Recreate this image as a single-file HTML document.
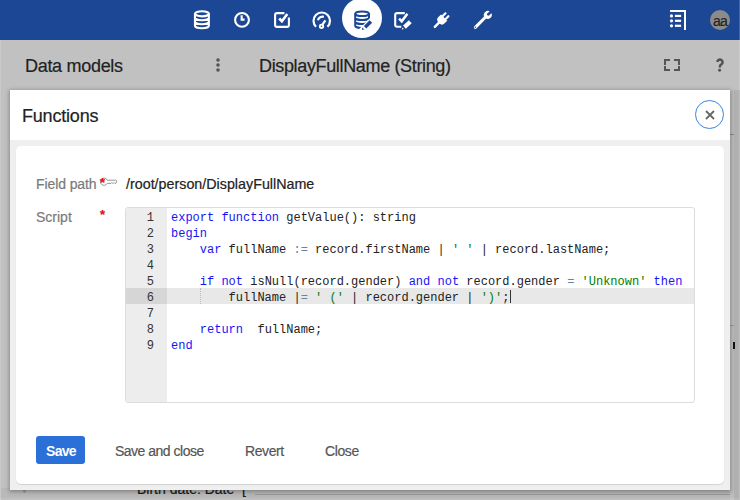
<!DOCTYPE html>
<html><head><meta charset="utf-8">
<style>
*{box-sizing:border-box;margin:0;padding:0}
html,body{width:740px;height:500px;overflow:hidden}
body{position:relative;background:#c1c1c1;font-family:"Liberation Sans",sans-serif;color:#222}
.abs{position:absolute}
.t{position:absolute;white-space:pre;line-height:1;-webkit-text-stroke:0.2px currentColor}
#hdr{left:0;top:0;width:740px;height:40px;background:#1c4794}
svg{position:absolute;overflow:visible}
#modal{left:10px;top:90px;width:720px;height:400px;background:#efefef;box-shadow:0 1px 4px 1px rgba(0,0,0,.28)}
#mhead{left:0;top:0;width:720px;height:50px;background:#fff}
#card{left:6px;top:56px;width:708px;height:338px;background:#fff;border-radius:5px;box-shadow:0 1px 1px rgba(0,0,0,.12)}
#editor{left:125px;top:207px;width:570px;height:196px;border:1px solid #dcdcdc;border-radius:3px;background:#fff;overflow:hidden}
#gutter{left:0;top:0;width:41px;height:196px;background:#ededed}
.code{position:absolute;font-family:"Liberation Mono",monospace;font-size:12px;line-height:16px;white-space:pre}
.ln{position:absolute;left:0;width:28px;text-align:right;font-family:"Liberation Mono",monospace;font-size:12px;line-height:16px;color:#333}
.k{color:#1515f5}.s{color:#008000}.o{color:#6783a3}
</style></head><body>
<div id="hdr" class="abs"></div>
<!-- database -->
<svg style="left:190px;top:7px" width="24" height="24" viewBox="0 0 24 24" fill="none" stroke="#fff" stroke-width="2.1">
<ellipse cx="11.9" cy="6.8" rx="6.95" ry="2.55"/>
<path d="M4.95 6.8V18.7M18.85 6.8V18.7M4.95 18.7a6.95 2.55 0 0 0 13.9 0M4.95 10.7a6.95 2.55 0 0 0 13.9 0M4.95 14.7a6.95 2.55 0 0 0 13.9 0"/>
</svg>
<!-- clock -->
<svg style="left:230px;top:8px" width="24" height="24" viewBox="0 0 24 24" fill="none" stroke="#fff" stroke-width="2.1">
<circle cx="12" cy="11.9" r="6.9"/><path d="M11.65 7.2V11.65H14.6" stroke-linejoin="miter"/>
</svg>
<!-- checkbox -->
<svg style="left:270px;top:8px" width="24" height="24" viewBox="0 0 24 24" fill="none" stroke="#fff" stroke-width="2.1">
<path d="M14.4 5.1H7.1Q5.1 5.1 5.1 7.1V16.9Q5.1 18.9 7.1 18.9H16.9Q18.9 18.9 18.9 16.9V9.6"/><path d="M9.2 10.5L11.9 13.2L17.3 6" stroke-width="2.6"/>
</svg>
<!-- gauge -->
<svg style="left:310px;top:8px" width="24" height="24" viewBox="0 0 24 24" fill="none" stroke="#fff" stroke-width="2.2">
<path d="M6.05 18.7A8.25 8.25 0 1 1 17.45 18.7"/>
<path d="M7.9 12.2A4.8 4.8 0 0 1 13.9 8.9"/>
<path d="M12.2 16.8L15.4 12.3"/>
<circle cx="11.5" cy="18.3" r="1.7" stroke-width="1.9"/>
</svg>
<!-- active -->
<div class="abs" style="left:342px;top:-2px;width:40px;height:40px;border-radius:50%;background:#fff"></div>
<svg style="left:350px;top:7px" width="26" height="26" viewBox="0 0 26 26" fill="none" stroke="#1c4794" stroke-width="2">
<ellipse cx="12.1" cy="6.75" rx="6.9" ry="2.35"/>
<path d="M5.2 6.75V18.65M19 6.75V11M5.2 10.65a6.9 2.35 0 0 0 13.8 0M5.2 14.65a6.9 2.35 0 0 0 13.8 0M5.2 18.65a6.9 2.35 0 0 0 13.8 0"/>
<path d="M10.5 24.9L23 12.5" stroke="#fff" stroke-width="6"/>
<path d="M15.1 20.3L20.9 14.5" stroke-width="3.5"/>
<path d="M12 20.4L12 22.8L14.6 22.6Z" fill="#1c4794" stroke="none"/>
</svg>
<!-- checkbox edit -->
<svg style="left:390px;top:8px" width="26" height="26" viewBox="0 0 26 26" fill="none" stroke="#fff" stroke-width="2.1">
<path d="M14.8 5.1H7.2Q5.2 5.1 5.2 7.1V16.8Q5.2 18.8 7.2 18.8H11.2"/>
<path d="M9.1 10.7L11.7 13.3L17.4 5.7" stroke-width="2.5"/>
<path d="M14.4 19.1L20.3 13.7" stroke-width="4.2"/>
<path d="M11.9 21.4L12.3 19.4L13.9 21Z" fill="#fff" stroke="none"/>
</svg>
<!-- plug -->
<svg style="left:430px;top:8px" width="24" height="24" viewBox="0 0 24 24" fill="#fff" stroke="#fff">
<g transform="translate(11.9 11.8) rotate(45)">
<path d="M0 10.0V2" stroke-width="2.4" stroke-linecap="round"/>
<path d="M-4.4 -3.2H4.4V0.6Q4.4 4.3 0.6 4.3H-0.6Q-4.4 4.3 -4.4 0.6Z" stroke="none"/>
<path d="M-2.1 -3V-7.1M2.1 -3V-7.1" stroke-width="2.2" stroke-linecap="round"/>
</g>
</svg>
<!-- wrench -->
<svg style="left:470px;top:8px" width="24" height="24" viewBox="0 0 24 24" fill="#fff" stroke="#fff">
<g transform="translate(17.8 6.9) rotate(45)">
<path d="M0 2V17.6" stroke-width="3" stroke-linecap="round"/>
<circle cx="0" cy="0" r="3.9" stroke="none"/>
<path d="M-1.25 -5V-0.6" stroke="#1c4794" stroke-width="0"/>
<rect x="-1.3" y="-5" width="2.6" height="4.3" fill="#1c4794" stroke="none"/>
<circle cx="0" cy="-0.7" r="1.3" fill="#1c4794" stroke="none"/>
<circle cx="0" cy="17.6" r="0.7" fill="#1c4794" stroke="none"/>
</g>
</svg>
<!-- list -->
<svg style="left:669px;top:10px" width="18" height="20" viewBox="0 0 18 20" fill="#fff">
<rect x="1" y="0" width="16" height="2"/><rect x="15" y="0" width="2" height="20"/>
<circle cx="2.5" cy="5.9" r="1.6"/><circle cx="2.5" cy="10.8" r="1.6"/><circle cx="2.5" cy="15.8" r="1.6"/>
<rect x="5.9" y="4.8" width="6.2" height="2.2"/><rect x="5.9" y="9.7" width="6.2" height="2.2"/><rect x="5.9" y="14.7" width="6.2" height="2.2"/>
</svg>
<!-- avatar -->
<div class="abs" style="left:710px;top:10px;width:20px;height:20px;border-radius:50%;background:#8b8b8b"></div>
<div class="t" style="left:713px;top:14px;font-size:14px;letter-spacing:-0.9px;color:#222">aa</div>

<!-- background title bar -->
<div class="t" style="left:25px;top:57px;font-size:18px;letter-spacing:-0.3px">Data models</div>
<svg style="left:216px;top:58px" width="4" height="14" viewBox="0 0 4 14" fill="#555"><circle cx="2" cy="2" r="1.8"/><circle cx="2" cy="7" r="1.8"/><circle cx="2" cy="12" r="1.8"/></svg>
<div class="t" style="left:259px;top:57px;font-size:18px;letter-spacing:-0.35px">DisplayFullName (String)</div>
<svg style="left:664px;top:59px" width="16" height="12" viewBox="0 0 16 12" fill="none" stroke="#555" stroke-width="2"><path d="M1 6V1H6M10 1H15V6M15 7V11H10M6 11H1V7"/></svg>
<svg style="left:712px;top:55px" width="16" height="20" viewBox="0 0 16 20" fill="none" stroke="#505050" stroke-width="2.4"><path d="M5.4 7A2.6 2.6 0 1 1 9.7 9.1Q7.9 10 7.9 11.4V12.4"/><circle cx="7.6" cy="15.3" r="1.45" fill="#505050" stroke="none"/></svg>

<!-- Background bottom text -->
<div class="abs" style="left:0;top:488px;width:740px;height:12px;background:#b9b9b9"></div>
<div class="abs" style="left:247px;top:488px;width:493px;height:12px;background:#b6b6b6"></div>
<div class="t" style="left:137px;top:482px;font-size:14px;color:#1a1a1a">Birth date: Date</div>
<div class="t" style="left:242px;top:482px;font-size:14px;color:#1a1a1a">[</div>
<div class="abs" style="left:255px;top:494px;width:485px;height:1px;background:#999"></div>
<div class="abs" style="left:730px;top:90px;width:4px;height:410px;background:#bcbcbc"></div>
<div class="abs" style="left:734px;top:90px;width:6px;height:410px;background:#b1b1b1"></div>
<div class="abs" style="left:0px;top:40px;width:1px;height:460px;background:#c9c9c9"></div>
<div class="abs" style="left:730px;top:134px;width:4px;height:1px;background:#888"></div>
<div class="abs" style="left:730px;top:325px;width:4px;height:1px;background:#999"></div>
<div class="abs" style="left:733px;top:342px;width:1.5px;height:7px;background:#111"></div>

<div class="abs" style="left:23px;top:489px;width:3px;height:3.5px;border-radius:50%;background:#9a9a9a"></div>
<!-- modal -->
<div id="modal" class="abs">
  <div id="mhead" class="abs"></div>
  <div id="card" class="abs"></div>
</div>
<div class="t" style="left:22px;top:107px;font-size:18px;letter-spacing:-0.2px">Functions</div>
<div class="abs" style="left:695px;top:100px;width:29px;height:29px;border-radius:50%;border:1.3px solid #3b82e0"></div>
<svg style="left:705px;top:110px" width="10" height="10" viewBox="0 0 10 10" stroke="#666" stroke-width="1.8"><path d="M1 1L9 9M9 1L1 9"/></svg>

<div class="t" style="left:36px;top:177px;font-size:14px;color:#7a7a7a;letter-spacing:-0.1px">Field path</div>
<svg style="left:100px;top:177px" width="18" height="10" viewBox="0 0 18 10" fill="none" stroke="#8a8a8a" stroke-width="0.9"><path d="M7.27 3.2H15.6Q16.8 3.2 16.8 4.4L15.9 6.4H15.1L14.4 5.7L13.7 6.4L13 5.7L12.3 6.4L11.6 5.7L10.9 6.4H7.17A3.6 3.6 0 1 1 7.27 3.2Z"/></svg>
<div class="t" style="left:100px;top:176px;font-size:13px;font-weight:bold;color:#e01010">*</div>

<div class="t" style="left:126px;top:177px;font-size:14.3px;color:#222">/root/person/DisplayFullName</div>

<div class="t" style="left:36px;top:210px;font-size:14px;color:#7a7a7a">Script</div>
<div class="t" style="left:100px;top:208px;font-size:13px;font-weight:bold;color:#e01010">*</div>

<div id="editor" class="abs">
  <div id="gutter" class="abs"></div>
  <div class="abs" style="left:0;top:80px;width:570px;height:16px;background:#e8e8e8"></div>
  <div class="abs" style="left:0;top:80px;width:41px;height:16px;background:#d6d6d6"></div>
  <div class="abs" style="left:74px;top:80px;width:0;height:16px;border-left:1px dotted #bbb"></div>
  <div class="ln" style="top:2px">1<br>2<br>3<br>4<br>5<br>6<br>7<br>8<br>9</div>
  <div class="code" style="left:45px;top:2px"><span class="k">export</span> <span class="k">function</span> getValue(): string
<span class="k">begin</span>
    <span class="k">var</span> fullName <span class="o">:=</span> record.firstName | <span class="s">' '</span> | record.lastName;

    <span class="k">if</span> <span class="k">not</span> isNull(record.gender) <span class="k">and</span> <span class="k">not</span> record.gender <span class="o">=</span> <span class="s">'Unknown'</span> <span class="k">then</span>
        fullName |<span class="o">=</span> <span class="s">' ('</span> | record.gender | <span class="s">')'</span>;
<span class="k"></span>
    <span class="k">return</span>  fullName;
<span class="k">end</span></div>
  <div class="abs" style="left:384px;top:82px;width:1px;height:13px;background:#333"></div>
</div>

<div class="abs" style="left:36px;top:436px;width:49px;height:28px;background:#2b6fd8;border-radius:3px"></div>
<div class="t" style="left:46px;top:444px;font-size:14px;font-weight:bold;color:#fff;letter-spacing:-0.7px;font-size:14px;-webkit-text-stroke:0">Save</div>
<div class="t" style="left:115px;top:444px;font-size:14px;color:#555;letter-spacing:-0.5px">Save and close</div>
<div class="t" style="left:245px;top:444px;font-size:14px;color:#555;letter-spacing:-0.4px">Revert</div>
<div class="t" style="left:325px;top:444px;font-size:14px;color:#555;letter-spacing:-0.4px">Close</div>
<div class="abs" style="left:739px;top:0;width:1px;height:500px;background:rgba(255,255,255,.18)"></div>
<div class="abs" style="left:0;top:498px;width:739px;height:2px;background:rgba(255,255,255,.12)"></div>
</body></html>
